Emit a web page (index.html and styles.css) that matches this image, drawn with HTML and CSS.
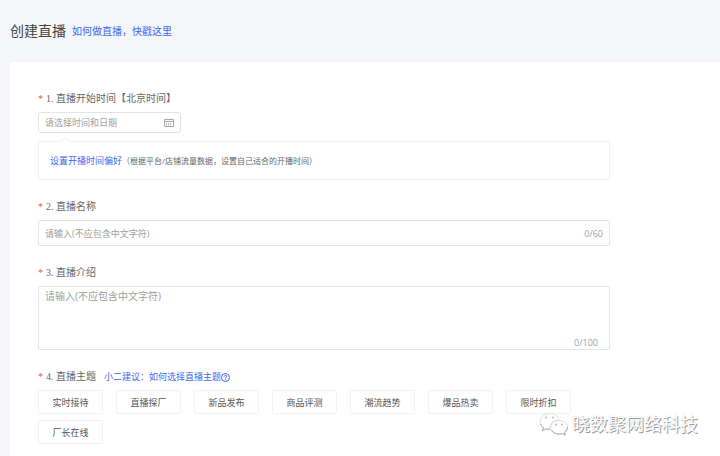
FILE: index.html
```html
<!DOCTYPE html>
<html lang="zh-CN">
<head>
<meta charset="utf-8">
<title>创建直播</title>
<meta name="viewport" content="width=device-width, initial-scale=1">
<link rel="stylesheet" href="styles.css">
</head>
<body>
<header class="page-head">
  <h1 class="page-title">创建直播</h1>
  <a class="head-link" href="#">如何做直播，快戳这里</a>
</header>
<main class="card">
  <form class="form">
    <section class="group">
      <label class="label" for="start"><span class="star">*</span>1. 直播开始时间【北京时间】</label>
      <div class="field date">
        <input id="start" type="text" placeholder="请选择时间和日期">
        <svg class="calendar" viewBox="0 0 10 10" aria-hidden="true">
          <path d="M.5 1.5h9v7h-9zM.5 3.5h9M2.5 .5v1M7.500 .5v1" />
          <path class="days" d="M2 5.500h6M2 7h6" />
        </svg>
      </div>
      <p class="tip"><a href="#">设置开播时间偏好</a><span class="tip-note">（根据平台/店铺流量数据，设置自己适合的开播时间）</span></p>
    </section>
    <section class="group">
      <label class="label" for="name"><span class="star">*</span>2. 直播名称</label>
      <div class="field name">
        <input id="name" type="text" placeholder="请输入(不应包含中文字符)">
        <span class="count">0/60</span>
      </div>
    </section>
    <section class="group">
      <label class="label" for="intro"><span class="star">*</span>3. 直播介绍</label>
      <div class="field intro">
        <textarea id="intro" placeholder="请输入(不应包含中文字符)"></textarea>
        <span class="count">0/100</span>
      </div>
    </section>
    <section class="group">
      <div class="label" id="topic"><span class="star">*</span>4. 直播主题
        <a class="advice" href="#">小二建议：如何选择直播主题<svg class="help" viewBox="0 0 9 9" aria-hidden="true"><circle cx="4.5" cy="4.5" r="4" /><path d="M3.2 3.7c0-1.7 2.6-1.7 2.6-.2 0 1-1.3 1-1.3 2M4.5 6.3v.9" /></svg></a>
      </div>
      <div class="tags" role="group" aria-labelledby="topic">
        <button type="button">实时接待</button>
        <button type="button">直播探厂</button>
        <button type="button">新品发布</button>
        <button type="button">商品评测</button>
        <button type="button">潮流趋势</button>
        <button type="button">爆品热卖</button>
        <button type="button">限时折扣</button>
        <button type="button">厂长在线</button>
      </div>
    </section>
  </form>
</main>
<div class="watermark">
  <svg class="wechat" viewBox="0 0 30 24" aria-hidden="true">
    <g class="bubbles">
      <path d="M11 17.500c-1.500 0-2.500-.2-4-.7l-3.500 2 .9-3.300C-1.500 11 .5 2 10.500 1.500c5 0 9 3 9.600 6.800-6-.2-10.500 4-9.100 9.200z" />
      <path d="M20 8.500c-11 .5-11 13.500 0 13.500 1.300 0 2.200-.2 3.300-.5l3 1.600-.8-2.800c6-4.800 2-11.800-5.500-11.800z" />
    </g>
    <path class="shade" d="M1.500 12c.8 1.700 1.700 2.700 2.900 3.500l-.9 3.300 3.500-2c1.500.5 2.500.7 4 .7M12.500 18c1.500 3 4.500 4 7.500 4 1.300 0 2.200-.2 3.300-.5l3 1.600-.8-2.800c2-1.500 3-3.300 3-5.300" />
    <g class="eyes"><circle cx="7" cy="5.500" r="1" /><circle cx="14" cy="5.500" r="1" /><circle cx="17" cy="12.500" r="1" /><circle cx="23" cy="12.500" r="1" /></g>
  </svg>
  <span>晓数聚网络科技</span>
</div>
</body>
</html>
```

FILE: styles.css
```css
* {
  box-sizing: border-box;
}

body {
  margin: 0;
  min-height: 100vh;
  display: flex;
  flex-direction: column;
  background: #f5f6fa;
  color: #666;
  font-family: "Open Sans", "Noto Sans CJK SC", sans-serif;
  font-size: 9px;
}

a {
  color: #3f68ec;
  text-decoration: none;
}

.page-head {
  display: flex;
  align-items: center;
  gap: 6px;
  padding: 20px 10px;
  line-height: 22px;
}

.page-title {
  margin: 0;
  color: #444;
  font-size: 14px;
  font-weight: 400;
}

.head-link {
  font-size: 10px;
}

.card {
  flex: 1;
  margin-left: 10px;
  padding: 28px 28px 10px;
  border-radius: 2px 0 0 0;
  background: #fff;
}

.form {
  display: flex;
  flex-direction: column;
  gap: 18px;
  max-width: 572px;
}

.label {
  display: flex;
  align-items: center;
  margin-bottom: 4px;
  font-family: "Liberation Serif", "Noto Sans CJK SC", serif;
  font-size: 10px;
  line-height: 18px;
}

.star {
  width: 8px;
  color: #e0633f;
}

.field {
  display: flex;
  align-items: center;
  padding: 0 6px;
  border: 1px solid #e4e4e6;
  border-radius: 3px;
}

.field input,
.field textarea {
  flex: 1;
  min-width: 0;
  padding: 0;
  border: 0;
  outline: 0;
  background: none;
  color: #666;
  font: inherit;
}

.field ::placeholder {
  color: #a0a0a0;
}

.date {
  width: 25%;
  height: 21px;
}

.calendar {
  width: 10px;
  height: 10px;
  fill: none;
  stroke: #aaa;
}

.days {
  stroke-dasharray: 1 1;
}

.tip {
  position: relative;
  display: flex;
  align-items: center;
  height: 39px;
  margin: 8px 0 0;
  padding: 0 11px;
  border: 1px solid #f2f2f4;
  border-radius: 2px;
}

.tip::before {
  content: "";
  position: absolute;
  top: -4px;
  left: 23px;
  width: 6px;
  height: 6px;
  border: 1px solid #f2f2f4;
  border-width: 1px 0 0 1px;
  background: #fff;
  transform: rotate(45deg);
}

.tip-note {
  font-size: 8px;
}

.name {
  height: 26px;
}

.count {
  color: #a0a0a0;
}

.intro {
  position: relative;
  height: 64px;
}

.intro textarea {
  align-self: stretch;
  resize: none;
  font-size: 10px;
  line-height: 18px;
}

.intro .count {
  position: absolute;
  right: 11px;
  bottom: 0;
}

.advice {
  display: flex;
  align-items: center;
  margin-left: 8px;
  font-family: "Open Sans", "Noto Sans CJK SC", sans-serif;
  font-size: 9px;
}

.help {
  width: 9px;
  height: 9px;
  fill: none;
  stroke: #3f68ec;
}

.tags {
  display: flex;
  flex-wrap: wrap;
  gap: 6px 13px;
}

.tags button {
  width: 65px;
  height: 24px;
  padding: 0;
  border: 1px solid #f2f2f4;
  border-radius: 2px;
  background: #fff;
  color: #555;
  font: inherit;
}

.watermark {
  position: absolute;
  right: 22px;
  bottom: 19px;
  display: flex;
  align-items: center;
  gap: 3px;
  color: #fff;
  font-size: 18px;
  line-height: 26px;
  text-shadow: 1px 1px 0 #999, 0 0 1px #ccc;
}

.wechat {
  width: 30px;
  height: 24px;
}

.bubbles {
  fill: #fff;
  stroke: #ddd;
}

.shade {
  fill: none;
  stroke: #aaa;
}

.eyes {
  fill: #bbb;
}
```
